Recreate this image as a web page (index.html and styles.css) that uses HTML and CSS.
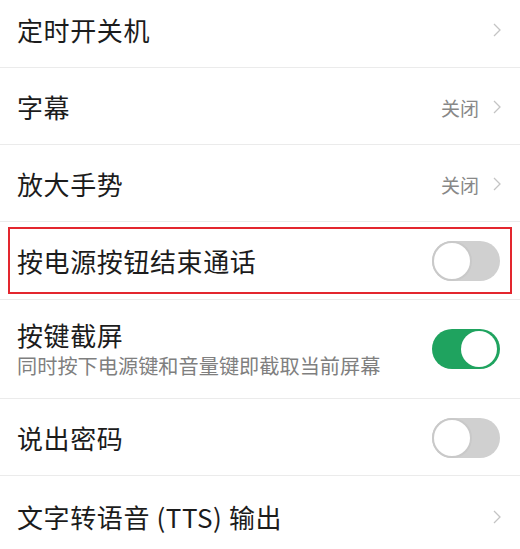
FILE: index.html
```html
<!DOCTYPE html>
<html lang="zh-CN">
<head>
<meta charset="utf-8">
<link rel="stylesheet" href="styles.css">
</head>
<body>
<div class="list">
  <div class="row first">
    <span class="title">定时开关机</span>
    <span class="end"><svg class="chev" viewBox="0 0 8 14"><path d="M1 1 L7 7 L1 13" /></svg></span>
  </div>
  <div class="row">
    <span class="title">字幕</span>
    <span class="end"><span class="value">关闭</span><svg class="chev" viewBox="0 0 8 14"><path d="M1 1 L7 7 L1 13" /></svg></span>
  </div>
  <div class="row">
    <span class="title">放大手势</span>
    <span class="end"><span class="value">关闭</span><svg class="chev" viewBox="0 0 8 14"><path d="M1 1 L7 7 L1 13" /></svg></span>
  </div>
  <div class="row boxed">
    <div class="highlight">
      <span class="title">按电源按钮结束通话</span>
      <span class="toggle off"><span class="knob"></span></span>
    </div>
  </div>
  <div class="row tall">
    <div class="texts">
      <span class="title">按键截屏</span>
      <span class="sub">同时按下电源键和音量键即截取当前屏幕</span>
    </div>
    <span class="toggle on"><span class="knob"></span></span>
  </div>
  <div class="row">
    <span class="title">说出密码</span>
    <span class="toggle off"><span class="knob"></span></span>
  </div>
  <div class="row last">
    <span class="title">文字转语音 (TTS) 输出</span>
    <span class="end"><svg class="chev" viewBox="0 0 8 14"><path d="M1 1 L7 7 L1 13" /></svg></span>
  </div>
</div>
</body>
</html>
```
FILE: styles.css
```css
html, body {
  margin: 0;
  padding: 0;
  background: #ffffff;
  overflow: hidden;
}
body {
  font-family: "Noto Sans CJK SC", "Noto Sans", sans-serif;
  color: #1c1c1c;
}
.list {
  display: flex;
  flex-direction: column;
}
.row {
  box-sizing: border-box;
  height: 77px;
  border-bottom: 1px solid #ebebeb;
  display: flex;
  align-items: center;
  justify-content: space-between;
  padding: 2px 20px 0 17px;
}
.row.first {
  margin-top: -9px;
  padding-top: 1px;
}
.row.boxed {
  height: 78px;
  padding: 5px 8px 5px 8px;
  align-items: stretch;
}
.row.tall {
  height: 99px;
  padding-top: 0;
}
.row.last {
  border-bottom: none;
  padding-top: 4px;
}
.highlight {
  flex: 1;
  box-sizing: border-box;
  border: 2px solid #e3262e;
  display: flex;
  align-items: center;
  justify-content: space-between;
  padding: 0 10px 0 7px;
}
.title {
  font-size: 26px;
  line-height: 32px;
  letter-spacing: 0.6px;
}
.texts {
  display: flex;
  flex-direction: column;
}
.sub {
  font-size: 20.2px;
  line-height: 26px;
  color: #7f7f7f;
  margin-top: 2px;
}
.end {
  display: flex;
  align-items: center;
  margin-right: -1px;
}
.value {
  font-size: 19px;
  color: #888888;
  margin-right: 14px;
}
.chev {
  width: 8px;
  height: 14px;
  fill: none;
  stroke: #c4c4c4;
  stroke-width: 1.3;
}
.toggle {
  box-sizing: border-box;
  width: 68px;
  height: 40px;
  border-radius: 20px;
  display: flex;
  align-items: center;
  flex-shrink: 0;
}
.toggle.off {
  background: #d0d0d0;
  justify-content: flex-start;
}
.toggle.off .knob {
  box-sizing: border-box;
  width: 40px;
  height: 40px;
  border-radius: 50%;
  background: #ffffff;
  border: 2px solid #c9c9c9;
}
.toggle.on {
  background: #1fa35f;
  justify-content: flex-end;
  padding-right: 3px;
}
.toggle.on .knob {
  width: 36px;
  height: 36px;
  border-radius: 50%;
  background: #ffffff;
}
```
